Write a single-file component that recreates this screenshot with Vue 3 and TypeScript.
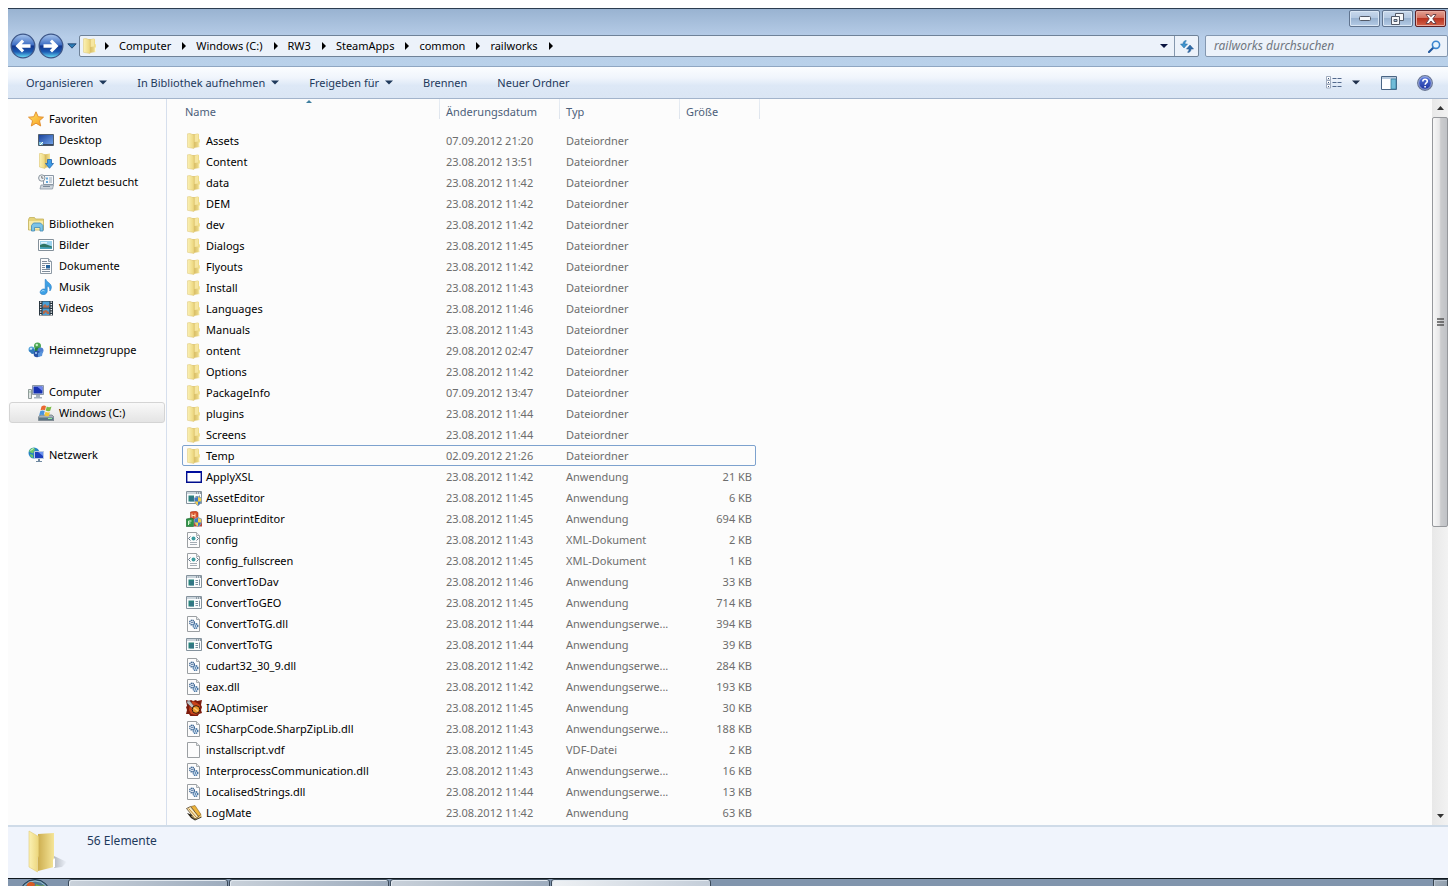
<script setup lang="ts">
interface NavEntry {
  label: string
  icon: string
  selected?: boolean
}
interface NavGroup extends NavEntry {
  children: NavEntry[]
}
interface FileRow {
  name: string
  icon: string
  date: string
  type: string
  size?: string
  focused?: boolean
}

const crumbs: string[] = ['Computer', 'Windows (C:)', 'RW3', 'SteamApps', 'common', 'railworks']

const commands: { label: string; menu: boolean }[] = [
  { label: 'Organisieren', menu: true },
  { label: 'In Bibliothek aufnehmen', menu: true },
  { label: 'Freigeben für', menu: true },
  { label: 'Brennen', menu: false },
  { label: 'Neuer Ordner', menu: false },
]

const navGroups: NavGroup[] = [
  {
    label: 'Favoriten',
    icon: 'star',
    children: [
      { label: 'Desktop', icon: 'desktop' },
      { label: 'Downloads', icon: 'downloads' },
      { label: 'Zuletzt besucht', icon: 'recent' },
    ],
  },
  {
    label: 'Bibliotheken',
    icon: 'library',
    children: [
      { label: 'Bilder', icon: 'picture' },
      { label: 'Dokumente', icon: 'document' },
      { label: 'Musik', icon: 'music' },
      { label: 'Videos', icon: 'video' },
    ],
  },
  { label: 'Heimnetzgruppe', icon: 'homegroup', children: [] },
  { label: 'Computer', icon: 'computer', children: [{ label: 'Windows (C:)', icon: 'drive', selected: true }] },
  { label: 'Netzwerk', icon: 'network', children: [] },
]

const folder = (name: string, date: string, focused = false): FileRow => ({
  name,
  icon: 'folder',
  date,
  type: 'Dateiordner',
  focused,
})
const file = (name: string, icon: string, time: string, type: string, size: string): FileRow => ({
  name,
  icon,
  date: `23.08.2012 ${time}`,
  type,
  size: `${size} KB`,
})

const EXT = 'Anwendungserwe...'
const rows: FileRow[] = [
  folder('Assets', '07.09.2012 21:20'),
  folder('Content', '23.08.2012 13:51'),
  folder('data', '23.08.2012 11:42'),
  folder('DEM', '23.08.2012 11:42'),
  folder('dev', '23.08.2012 11:42'),
  folder('Dialogs', '23.08.2012 11:45'),
  folder('Flyouts', '23.08.2012 11:42'),
  folder('Install', '23.08.2012 11:43'),
  folder('Languages', '23.08.2012 11:46'),
  folder('Manuals', '23.08.2012 11:43'),
  folder('ontent', '29.08.2012 02:47'),
  folder('Options', '23.08.2012 11:42'),
  folder('PackageInfo', '07.09.2012 13:47'),
  folder('plugins', '23.08.2012 11:44'),
  folder('Screens', '23.08.2012 11:44'),
  folder('Temp', '02.09.2012 21:26', true),
  file('ApplyXSL', 'window', '11:42', 'Anwendung', '21'),
  file('AssetEditor', 'appshield', '11:45', 'Anwendung', '6'),
  file('BlueprintEditor', 'blocks', '11:45', 'Anwendung', '694'),
  file('config', 'xml', '11:43', 'XML-Dokument', '2'),
  file('config_fullscreen', 'xml', '11:45', 'XML-Dokument', '1'),
  file('ConvertToDav', 'app', '11:46', 'Anwendung', '33'),
  file('ConvertToGEO', 'app', '11:45', 'Anwendung', '714'),
  file('ConvertToTG.dll', 'dll', '11:44', EXT, '394'),
  file('ConvertToTG', 'app', '11:44', 'Anwendung', '39'),
  file('cudart32_30_9.dll', 'dll', '11:42', EXT, '284'),
  file('eax.dll', 'dll', '11:42', EXT, '193'),
  file('IAOptimiser', 'optimiser', '11:45', 'Anwendung', '30'),
  file('ICSharpCode.SharpZipLib.dll', 'dll', '11:43', EXT, '188'),
  file('installscript.vdf', 'blank', '11:45', 'VDF-Datei', '2'),
  file('InterprocessCommunication.dll', 'dll', '11:43', EXT, '16'),
  file('LocalisedStrings.dll', 'dll', '11:44', EXT, '13'),
  file('LogMate', 'logmate', '11:42', 'Anwendung', '63'),
]
</script>

<template>
  <div class="screen">
    <svg class="sprites" aria-hidden="true">
      <defs>
        <linearGradient id="gFold" x1="0" x2="1"><stop offset="0" stop-color="#fbf1b4" /><stop offset="1" stop-color="#ecd67c" /></linearGradient>
        <linearGradient id="gBack" x1="0" x2="1"><stop offset="0" stop-color="#cdae50" /><stop offset="1" stop-color="#f5e598" /></linearGradient>
        <linearGradient id="gShade" x1="0" x2="1"><stop offset="0" stop-color="#8d939c" stop-opacity=".6" /><stop offset="1" stop-color="#8d939c" stop-opacity="0" /></linearGradient>
        <linearGradient id="gStar" x1="0" y1="0" x2="1" y2="1"><stop offset="0" stop-color="#ffe76a" /><stop offset="1" stop-color="#f79a1c" /></linearGradient>
        <linearGradient id="gScreen" x1="0" y1="0" x2="1" y2="1"><stop offset="0" stop-color="#173f98" /><stop offset="1" stop-color="#78aaf0" /></linearGradient>
        <linearGradient id="gOrb" x1="0" y1="0" x2="0" y2="1"><stop offset="0" stop-color="#a9c6ee" /><stop offset=".45" stop-color="#3f6fc4" /><stop offset=".5" stop-color="#12358c" /><stop offset=".75" stop-color="#1d5cb4" /><stop offset="1" stop-color="#6ee6fa" /></linearGradient>
        <linearGradient id="gHelp" x1="0" y1="0" x2="0" y2="1"><stop offset="0" stop-color="#5a7be0" /><stop offset="1" stop-color="#1a2f9a" /></linearGradient>
      </defs>
      <symbol id="i-folder" viewBox="0 0 16 16">
        <path d="M6 1.500l6-1 1 .7V6l1 .5v7.500L7 15z" fill="url(#gBack)" />
        <path d="M8.500 1.500l3.500-.5v7.500l-3.500.5z" fill="#f6e6a0" />
        <path d="M1.500.8L4 .5l4 1.500v13.500l-6.500-1.200z" fill="url(#gFold)" stroke="#dcc577" stroke-width=".5" />
        <path d="M12.800 9.500v4.500l1.200-.3v-4.200z" fill="#fdf8dc" />
      </symbol>
      <symbol id="i-star" viewBox="0 0 16 16"><path d="M8 .8l2.200 4.900 5.300.5-4 3.500 1.200 5.300L8 12.200 3.300 15l1.200-5.300-4-3.500 5.300-.5z" fill="url(#gStar)" stroke="#e08a2a" stroke-width=".9" /></symbol>
      <symbol id="i-desktop" viewBox="0 0 16 16"><path d="M.5 2.500h15v11H.5z" fill="url(#gScreen)" stroke="#52606e" /><path d="M1 12h14v1.500H1z" fill="#3a4a63" /><path d="M1 10h4v3H1z" fill="#7fc4dc" /><path d="M2 13l3-3" stroke="#fff" /></symbol>
      <symbol id="i-downloads" viewBox="0 0 16 16"><path d="M6 1.500L12 .500v13.500l-6 1z" fill="url(#gBack)" /><path d="M1.500.5L4 .5l3 1.500v13.500l-5.500-1.500z" fill="url(#gFold)" stroke="#d8bd5d" stroke-width=".5" /><path d="M9.500 6.500h4v4h2L11.500 15.300 7.500 10.500h2z" fill="#3d9be6" stroke="#2266ad" stroke-width=".8" /></symbol>
      <symbol id="i-recent" viewBox="0 0 16 16"><path d="M5.500 1.500h10v9h-10z" fill="#f5f8fb" stroke="#8c98a5" /><path d="M8 3.500h2v2H8zM8 7h2v2H8z" fill="#63a8dc" /><path d="M11 4h3M11 6h3M11 8h3" stroke="#9aa8b6" /><circle cx="3.800" cy="4" r="3.200" fill="#eef2f5" stroke="#8a949d" /><path d="M3.800 2v2.200h1.600" stroke="#555" fill="none" stroke-width=".8" /><path d="M3 11h12.500l-1 4H2z" fill="#cfd6dd" stroke="#8c98a5" stroke-width=".8" /><path d="M5 12.500h7" stroke="#7a8a9a" /></symbol>
      <symbol id="i-library" viewBox="0 0 16 16"><path d="M.5 3.500l1-2h5l1 1.500h8v11H.5z" fill="#e6d47a" stroke="#c3b05a" stroke-width=".8" /><path d="M1 5h14v8.500H1z" fill="#f6ebaa" /><path d="M3.500 15V9.500l2-2.500h7L15 9.500V15h-3v-3.500H6.500V15z" fill="#7cc4e8" stroke="#3f88b4" stroke-width=".8" /></symbol>
      <symbol id="i-picture" viewBox="0 0 16 16"><path d="M.5 2.500h15v11H.5z" fill="#fff" stroke="#84909a" /><path d="M2 4h12v8H2z" fill="#9cd2ee" /><path d="M2 8l4-1.500 8 3V12H2z" fill="#2f7565" /><path d="M2 10l12 .5V12H2z" fill="#48a2ba" /><path d="M3 5h6v1.500H3z" fill="#e5f5fc" /></symbol>
      <symbol id="i-document" viewBox="0 0 16 16"><path d="M2.500.5h8l3 3v12h-11z" fill="#fbfcfd" stroke="#8d99a4" /><path d="M10.500.5v3h3" fill="#dce4ea" stroke="#8d99a4" /><path d="M4 3.500h5M4 5.500h8M4 11.500h8M4 13.500h8M4 7.500h3M4 9.500h3" stroke="#7f8d9b" /><path d="M8 7h4v3.500H8z" fill="#24649e" /></symbol>
      <symbol id="i-music" viewBox="0 0 16 16"><path d="M8 .5c.4 3 6 3.500 5.300 8.500-.2 1.200-.8 2.200-1.500 3 .5-3-1-4.500-2.600-5v5.500c-.4 2.500-2.500 3.300-4.700 3S1.300 13 3 11.300s3.300-1.500 4.200-1V.5z" fill="#3da1e6" stroke="#2379c4" stroke-width=".6" /><path d="M3.500 12.500c1-1.300 2.500-1 3-.6" stroke="#b5e0fa" fill="none" /></symbol>
      <symbol id="i-video" viewBox="0 0 16 16"><path d="M1 1h14v14.500H1z" fill="#26333d" /><path d="M4.500 1.500h7v6h-7zM4.500 8.500h7v6.500h-7z" fill="#4b9fd5" /><path d="M5 6l2-2 2 2 2-1v2.500H5zM5 11l3-1 3 2v2H9l-1-2-2 2H5z" fill="#b66a4a" /><path d="M2.700 1.500v14M13.300 1.500v14" stroke="#f2f5f7" stroke-width="1.500" stroke-dasharray="1.300 1.200" /></symbol>
      <symbol id="i-homegroup" viewBox="0 0 16 16"><circle cx="9.500" cy="4" r="3.500" fill="#4ca653" /><path d="M6.500 7c1-2 5-2 6 0l.5 3H6z" fill="#27833c" /><circle cx="3.500" cy="7.500" r="3" fill="#5aa6dc" /><path d="M.8 8.500l5-2 2 5-4 .5z" fill="#3078bb" /><circle cx="12.500" cy="8.500" r="3" fill="#4d7fd0" /><circle cx="9" cy="12" r="3.300" fill="#2853a5" /><path d="M10 11l5-2-1 5-4 1z" fill="#5994dc" /><circle cx="8.800" cy="3" r="1.200" fill="#c7efc5" /><circle cx="3" cy="6.800" r="1" fill="#d7effc" /><circle cx="8" cy="11" r="1" fill="#b4d2fa" /></symbol>
      <symbol id="i-computer" viewBox="0 0 16 16"><path d="M.5 5.500h3v9h-3z" fill="#dfe4e4" stroke="#8f9b99" /><path d="M1.500 8h1" stroke="#4c9c62" /><path d="M4.500 1.500h11v9h-11z" fill="#d6dde6" stroke="#8d99a6" /><path d="M5.500 2.500h9v7h-9z" fill="#1731b2" /><path d="M9 2.500h5.500V7z" fill="#7087ee" /><path d="M8 11h4v2H8zM6 13h8v1.500H6z" fill="#a5b1bd" /></symbol>
      <symbol id="i-drive" viewBox="0 0 16 16"><path d="M2 10h12l2 2v3.500H.5V12z" fill="#a7b2ba" stroke="#66737d" stroke-width=".7" /><path d="M1 12.500h14.500V15H1z" fill="#5b7686" /><path d="M10 13h4v1h-4z" fill="#8cf0a0" /><path d="M3.500 1.500C5.500 0 7 .5 8 1.200L7 5.300c-1.500-.8-2.700-.8-4.500 0z" fill="#e9682f" /><path d="M8.800 1.500c1.500.9 3 .9 4.700 0l-1.300 4.300c-1.700.9-3 .6-4.500-.2z" fill="#7cbb43" /><path d="M2.200 6.200c2-.9 3-.7 4.500.1L5.700 10.300c-1.500-.7-2.700-.7-4.500 0z" fill="#4a95dc" /><path d="M7.500 6.700c1.500.9 3 .9 4.500.2l-1.200 4.100c-1.600.6-3 .4-4.400-.4z" fill="#f5c537" /></symbol>
      <symbol id="i-network" viewBox="0 0 16 16"><circle cx="6" cy="6" r="5.500" fill="#2684c4" /><path d="M2 2.500C5 0 7 1 7 2.500S5 4 5.500 5.500 2 6 1 4zM2 7l3 1v3L2.500 9.500z" fill="#6cc868" /><path d="M2.500 3.500l3-2" stroke="#ddf7e2" /><path d="M6.500 4.500h9v7h-9z" fill="#1c3fbc" stroke="#bccae0" /><path d="M10 5h5v4z" fill="#6b92ef" /><path d="M10 12h2v2h-2zM8 14h6v1H8z" fill="#7089a1" /></symbol>
      <symbol id="i-window" viewBox="0 0 16 16"><path d="M.7 2.700h14.600v10.600H.7z" fill="#fff" stroke="#000e8e" stroke-width="1.400" /><path d="M0 2h16v2H0z" fill="#000e9e" /></symbol>
      <symbol id="i-app" viewBox="0 0 16 16"><path d="M.5 1.500h15v12H.5z" fill="#fafcfd" stroke="#84929d" /><path d="M1 2h14v2H1z" fill="#cbd5dc" /><path d="M10 3h1M12 3h1M14 3h1" stroke="#53616d" /><path d="M2.500 5.500h5.500v6H2.500z" fill="#2a827c" /><path d="M4 7h4v4.500H4z" fill="#39698f" opacity=".5" /><path d="M9.500 6.500h2.500M9.500 8.500h2.500M9.500 10.500h2.500M13.500 5.500v6" stroke="#7d90a0" /></symbol>
      <symbol id="i-shield" viewBox="0 0 16 16"><path d="M8.300 8L12 6.500 15.700 8c0 4-1 6-3.700 7.700C9.300 14 8.300 12 8.300 8z" fill="#3d78c8" stroke="#92a4b5" stroke-width=".8" /><path d="M12 7l3.200 1.300V11.500H12zM8.900 11.500H12v3.700c-1.900-1-2.700-2.200-3.100-3.700z" fill="#f5d04b" /></symbol>
      <symbol id="i-appshield" viewBox="0 0 16 16"><use href="#i-app" /><use href="#i-shield" /></symbol>
      <symbol id="i-blocks" viewBox="0 0 16 16"><path d="M4.500 1l5-1 2.500 1.500V7L10.500 8h-6z" fill="#d8502c" stroke="#a33a20" stroke-width=".6" /><path d="M6 2.500v4M9 2.500v4M6 4.500h3" stroke="#ffe0b5" /><path d="M.3 8l5-1 2.200 1v7.500H.3z" fill="#2d9446" stroke="#176029" stroke-width=".6" /><path d="M2.500 14V10h3M2.500 12h2" stroke="#d9f8d5" fill="none" /><path d="M8 9l2-2h4l2 2v6.500H8z" fill="#b7453a" /><use href="#i-shield" /></symbol>
      <symbol id="i-blank" viewBox="0 0 16 16"><path d="M1.500.5h9l3 3v12h-12z" fill="#fcfcfc" stroke="#9b9fa2" /><path d="M10.500.5v3h3" fill="#e4e6e7" stroke="#a8adb0" /></symbol>
      <symbol id="i-xml" viewBox="0 0 16 16"><use href="#i-blank" /><circle cx="7.500" cy="6.500" r="2" fill="#3d9c9e" /><path d="M4.500 4.500l-2 2 2 2M10.500 4.500l2 2-2 2" fill="none" stroke="#52667a" stroke-width=".9" /><path d="M4 10.500h7M4 12.500h7" stroke="#a5adb5" /></symbol>
      <symbol id="i-dll" viewBox="0 0 16 16"><use href="#i-blank" /><circle cx="6" cy="6.500" r="2.300" fill="#f2f8ff" stroke="#38618f" stroke-width="1.400" stroke-dasharray="1.200 .5" /><circle cx="6" cy="6.500" r=".8" fill="#38618f" /><circle cx="9.500" cy="10" r="2.300" fill="#d5e7f7" stroke="#406f9f" stroke-width="1.400" stroke-dasharray="1.200 .5" /><circle cx="9.500" cy="10" r=".8" fill="#38618f" /></symbol>
      <symbol id="i-optimiser" viewBox="0 0 16 16"><path d="M0 0l3 1 2-1 2 1 3-1 1 1 5-1-1 5 1 2-1 3 1 3-3 1-2 3-3-1-3 1-2-3-3 0 1-4-1-3 1-1z" fill="#7c1b0d" /><path d="M4 4l3-3 4 2 3 2v7l-4 3-5-1-2-4z" fill="#c8431a" /><path d="M1 1l3 0 4 5-2 2-5-5z" fill="#bfc4c4" stroke="#434" stroke-width=".5" /><circle cx="10" cy="9.500" r="3.800" fill="#eb972f" stroke="#35180a" /><path d="M8 8l4 3" stroke="#f8d37c" stroke-width="1.400" /></symbol>
      <symbol id="i-logmate" viewBox="0 0 16 16"><path d="M1 8l4 5 4 2.500 6.500-3-1-3-6 1z" fill="#292418" /><path d="M5 11l9-3 2 3.500-7 3z" fill="#e4c177" /><path d="M5 1.500L9 .500l6 9-3 2z" fill="#edb43b" stroke="#6c4a15" stroke-width=".5" /><path d="M.5 3.500l4-2 8 10-3.500 2.500z" fill="#f9e9bb" stroke="#49351b" stroke-width=".7" /><path d="M2.500 3.500l8 9" stroke="#bd8630" /></symbol>
    </svg>

    <div class="window">
      <header class="frame">
        <div class="caption">
          <button class="cap" aria-label="Minimieren"><svg width="12" height="6" viewBox="0 0 12 6"><rect x=".5" y=".5" width="11" height="4" rx="1" fill="#f6f8fa" stroke="#535a68" /></svg></button>
          <button class="cap" aria-label="Verkleinern"><svg width="13" height="12" viewBox="0 0 13 12"><path d="M4.500.5h8v7h-8z" fill="#f6f8fa" stroke="#535a68" /><path d="M.5 3.500h8v8h-8z" fill="#f6f8fa" stroke="#535a68" /><path d="M3 6.500h3v2H3z" fill="#a9c1dd" stroke="#535a68" /></svg></button>
          <button class="cap close" aria-label="Schließen"><svg width="12" height="10" viewBox="0 0 12 10"><path d="M1 .5h3l2 2.200L8 .5h3L7.800 4.800 11 9.500H8L6 7 4 9.500H1l3.200-4.700z" fill="#fff" stroke="#5e3b43" stroke-width=".9" /></svg></button>
        </div>
        <div class="navbar">
          <div class="travel">
            <button class="orb" aria-label="Zurück"><svg width="26" height="26" viewBox="0 0 26 26"><circle cx="13" cy="13" r="11.800" fill="url(#gOrb)" stroke="#3d5688" stroke-width="1.300" /><path d="M5.500 13l6.500-6.500 2.200 2.200-2.500 2.600H20.500v3.400h-8.800l2.500 2.600L12 19.500z" fill="#fff" /></svg></button>
            <button class="orb" aria-label="Vorwärts"><svg width="26" height="26" viewBox="0 0 26 26"><circle cx="13" cy="13" r="11.800" fill="url(#gOrb)" stroke="#3d5688" stroke-width="1.300" /><path d="M20.500 13L14 6.500l-2.200 2.200 2.500 2.600H5.500v3.400h8.800l-2.500 2.600L14 19.500z" fill="#fff" /></svg></button>
            <button class="history" aria-label="Letzte Seiten"><svg width="10" height="6" viewBox="0 0 10 6"><path d="M.8.800h8.400L5 5.200z" fill="#2b7cb6" stroke="#1b3a66" stroke-width=".8" /></svg></button>
          </div>
          <nav class="address" aria-label="Adresse">
            <svg class="icon"><use href="#i-folder" /></svg>
            <template v-for="c in crumbs" :key="c">
              <svg class="chev" viewBox="0 0 4 8"><path d="M0 0l4 4-4 4z" /></svg>
              <button class="crumb">{{ c }}</button>
            </template>
            <svg class="chev" viewBox="0 0 4 8"><path d="M0 0l4 4-4 4z" /></svg>
            <button class="drop" aria-label="Vorherige Orte"><svg width="8" height="4" viewBox="0 0 8 4"><path d="M0 0h8L4 4z" /></svg></button>
            <button class="refresh" aria-label="Aktualisieren"><svg width="14" height="13" viewBox="0 0 14 13"><path d="M6 .5C4 .8 3 2 3 4H.500l3.500 4L7.500 4H5c0-1.500.3-2.500 1.500-3z" fill="#3f93cd" stroke="#226ba3" stroke-width=".5" /><path d="M8 12.500c2-.3 3-1.500 3-3.500h2.500L10 5 6.500 9H9c0 1.500-.3 2.500-1.500 3z" fill="#2f6da9" stroke="#22508b" stroke-width=".5" /></svg></button>
          </nav>
          <label class="search">
            <input type="text" placeholder="railworks durchsuchen" aria-label="railworks durchsuchen" />
            <svg width="13" height="13" viewBox="0 0 13 13"><path d="M5.500 7.500L1 12" stroke="#23589e" stroke-width="2.200" stroke-linecap="round" /><circle cx="8" cy="4.800" r="3.600" fill="#e9f5fe" stroke="#3c86cf" stroke-width="1.600" /></svg>
          </label>
        </div>
      </header>

      <div class="commands" role="toolbar" aria-label="Befehle">
        <button v-for="c in commands" :key="c.label" class="command">
          {{ c.label }}
          <svg v-if="c.menu" width="8" height="5" viewBox="0 0 8 5"><path d="M0 .500h8L4 4.500z" fill="#1e395b" /></svg>
        </button>
        <div class="tools">
          <button class="tool" aria-label="Ansicht ändern"><svg width="16" height="13" viewBox="0 0 16 13"><path d="M.5.5h4v3.500h-4zM.5 4.500h4V8h-4zM.5 8.500h4V12h-4z" fill="#fff" stroke="#8a98ad" stroke-width=".8" /><path d="M2 2h1v1H2zM2 6h1v1H2zM2 10h1v1H2z" fill="#35517c" /><path d="M6.500 2.500h4M11.500 2.500h4M6.500 6.500h4M11.500 6.500h4M6.500 10.500h4M11.500 10.500h4" stroke="#52698d" /></svg></button>
          <button class="tool more" aria-label="Weitere Optionen"><svg width="8" height="5" viewBox="0 0 8 5"><path d="M0 .500h8L4 4.500z" fill="#1e2f4b" /></svg></button>
          <button class="tool pane" aria-label="Vorschaufenster"><svg width="16" height="14" viewBox="0 0 16 14"><path d="M.5.5h15v13H.5z" fill="#fff" stroke="#4a6584" /><path d="M1 1h14v2H1z" fill="#b6c9dd" /><path d="M10 3h5v10h-5z" fill="#70bcd8" stroke="#3b7f9f" stroke-width=".8" /></svg></button>
          <button class="tool" aria-label="Hilfe"><svg width="16" height="16" viewBox="0 0 16 16"><circle cx="8" cy="8" r="7.300" fill="url(#gHelp)" stroke="#6b7894" stroke-width="1.300" /><circle cx="8" cy="8" r="6.300" fill="none" stroke="#c2cdec" stroke-width=".7" /><path d="M5.800 6.400c0-3 4.500-2.800 4.500-.2 0 1.700-2.100 1.700-2.100 3.500M8.100 11v1.500" fill="none" stroke="#fff" stroke-width="1.600" /></svg></button>
        </div>
      </div>

      <main class="body">
        <nav class="tree" aria-label="Navigationsbereich">
          <ul v-for="g in navGroups" :key="g.label">
            <li><a href="#"><svg class="icon"><use :href="'#i-' + g.icon" /></svg>{{ g.label }}</a></li>
            <li v-for="n in g.children" :key="n.label">
              <a href="#" class="child" :class="{ selected: n.selected }"><svg class="icon"><use :href="'#i-' + n.icon" /></svg>{{ n.label }}</a>
            </li>
          </ul>
        </nav>
        <section class="list">
          <table>
            <colgroup><col class="c-name" /><col class="c-mid" /><col class="c-mid" /><col class="c-size" /></colgroup>
            <thead>
              <tr>
                <th class="sorted" aria-sort="ascending">Name</th>
                <th>Änderungsdatum</th>
                <th>Typ</th>
                <th>Größe</th>
              </tr>
            </thead>
            <tbody>
              <tr v-for="r in rows" :key="r.name" :class="{ focused: r.focused }">
                <td><span class="name"><svg class="icon"><use :href="'#i-' + r.icon" /></svg>{{ r.name }}</span></td>
                <td>{{ r.date }}</td>
                <td>{{ r.type }}</td>
                <td class="size">{{ r.size }}</td>
              </tr>
            </tbody>
          </table>
        </section>
        <div class="scroll">
          <button class="arrow" aria-label="Nach oben"><svg width="7" height="4" viewBox="0 0 7 4"><path d="M0 4h7L3.500 0z" fill="#333" /></svg></button>
          <div class="track">
            <div class="thumb"><svg width="7" height="8" viewBox="0 0 7 8"><path d="M0 1h7M0 4h7M0 7h7" stroke="#555" stroke-width="1.500" /></svg></div>
          </div>
          <button class="arrow" aria-label="Nach unten"><svg width="7" height="4" viewBox="0 0 7 4"><path d="M0 0h7L3.500 4z" fill="#333" /></svg></button>
        </div>
      </main>

      <footer class="details">
        <svg width="40" height="44" viewBox="0 0 40 44">
          <path d="M26 38l8-1 5-5-13-6z" fill="url(#gShade)" />
          <path d="M10 4l16-1v34l-16 4z" fill="url(#gBack)" />
          <path d="M1 1l9.500 5.500V26l-1 2v14L1 37z" fill="url(#gFold)" stroke="#e2cb74" stroke-width=".6" />
          <path d="M26 28l1 1v8l-2 1v-8z" fill="#fff" />
        </svg>
        <span>56 Elemente</span>
      </footer>
    </div>

    <div class="taskbar">
      <button class="start" aria-label="Start"><svg width="32" height="32" viewBox="0 0 32 32"><circle cx="16" cy="16" r="15.500" fill="#4f7891" stroke="#253d52" /><circle cx="16" cy="16" r="14" fill="none" stroke="#9ec2d3" /><path d="M8 5c3-3 6-2 8 0l-2 8H7z" fill="#d85b25" /><path d="M17 5c3 2 6 2 8 1l-2 8h-8z" fill="#7fae3c" /></svg></button>
      <div class="tasks">
        <button class="task" aria-label="Programm 1"></button>
        <button class="task" aria-label="Programm 2"></button>
        <button class="task" aria-label="Programm 3"></button>
        <button class="task active" aria-label="railworks"></button>
      </div>
      <button class="peek" aria-label="Desktop anzeigen"></button>
    </div>
  </div>
</template>

<style>
body {
  margin: 0;
  background: #fff;
}
</style>

<style scoped>
.screen {
  box-sizing: border-box;
  height: 100vh;
  padding: 8px 8px 0;
  display: flex;
  flex-direction: column;
  overflow: hidden;
  background: #fff;
  color: #000;
  font: 11px/21px "Noto Sans", "Open Sans", sans-serif;
}
.sprites {
  position: absolute;
  width: 0;
  height: 0;
}
button {
  padding: 0;
  border: 0;
  background: none;
  color: inherit;
  font: inherit;
  display: flex;
  align-items: center;
  justify-content: center;
}
svg {
  display: block;
  flex: none;
}
.icon {
  width: 16px;
  height: 16px;
}
.window {
  flex: 1;
  min-height: 0;
  display: flex;
  flex-direction: column;
}

.frame {
  border-top: 1px solid #2c3c50;
  background: linear-gradient(#99b3d1, #b7cde8 50%, #b9d1ea);
  border-bottom: 1px solid #8fa6c2;
}
.caption {
  display: flex;
  justify-content: flex-end;
  gap: 2px;
  padding: 1px 2px 0 0;
}
.cap {
  box-sizing: border-box;
  width: 31px;
  height: 17px;
  border: 1px solid #60748f;
  border-radius: 2px;
  background: linear-gradient(#c9d9eb, #b4c9e2 45%, #98b2d0 50%, #b5cce6);
  box-shadow: inset 0 0 0 1px #d9e6f4;
}
.cap.close {
  border-color: #5c1f24;
  background: linear-gradient(#e3a193, #d37262 45%, #b93320 50%, #d3634a);
  box-shadow: inset 0 0 0 1px #e8aca0;
}
.navbar {
  display: flex;
  align-items: center;
  padding: 6px 0 7px 2px;
}
.travel {
  display: flex;
  align-items: center;
  gap: 2px;
  margin-right: 1px;
}
.history {
  width: 12px;
  height: 20px;
}
.address {
  flex: 1;
  box-sizing: border-box;
  height: 22px;
  display: flex;
  align-items: center;
  gap: 10px;
  padding-left: 2px;
  border: 1px solid #6f8298;
  border-radius: 2px;
  background: #ecf2fa;
}
.address .icon {
  margin-right: -3px;
}
.chev {
  width: 4px;
  height: 8px;
}
.crumb {
  padding-right: 1px;
  line-height: 20px;
  white-space: nowrap;
}
.drop {
  margin-left: auto;
  height: 20px;
}
.drop path {
  fill: #0b1540;
}
.refresh {
  width: 24px;
  height: 20px;
  margin-left: -4px;
  border-left: 1px solid #8598ae;
}
.search {
  box-sizing: border-box;
  width: 243px;
  height: 22px;
  margin-left: 6px;
  display: flex;
  align-items: center;
  padding: 0 6px 0 8px;
  border: 1px solid #8397b0;
  border-radius: 2px;
  background: #ecf2fa;
}
.search input {
  flex: 1;
  min-width: 0;
  height: 20px;
  padding: 0;
  border: 0;
  outline: 0;
  background: none;
  font: italic 12px/20px "Noto Sans", "Open Sans", sans-serif;
}
.search input::placeholder {
  color: #6f7680;
  opacity: 1;
}

.commands {
  height: 32px;
  flex: none;
  box-sizing: border-box;
  display: flex;
  align-items: center;
  padding: 0 15px 0 18px;
  gap: 30px;
  color: #1e395b;
  background: linear-gradient(#fbfdff, #f0f5fc 35%, #dde8f6 60%, #dbe6f4);
  border-bottom: 1px solid #a3b4cb;
}
.command {
  gap: 6px;
  white-space: nowrap;
}
.tools {
  margin-left: auto;
  display: flex;
  align-items: center;
}
.tool.more {
  margin: 0 21px 0 10px;
}
.tool.pane {
  margin-right: 20px;
}

.body {
  flex: 1;
  min-height: 0;
  display: flex;
  background: #fcfcfc;
}
.tree {
  box-sizing: border-box;
  width: 159px;
  flex: none;
  padding: 9px 1px 0;
  border-right: 1px solid #d6dfed;
}
.tree ul {
  list-style: none;
  margin: 0 0 21px;
  padding: 0;
}
.tree a {
  display: flex;
  align-items: center;
  gap: 5px;
  height: 21px;
  padding-left: 19px;
  color: #000;
  text-decoration: none;
  white-space: nowrap;
}
.tree a.child {
  padding-left: 29px;
}
.tree a.selected {
  box-sizing: border-box;
  padding-left: 28px;
  border: 1px solid #d4d4d4;
  border-radius: 3px;
  background: linear-gradient(#f9f9f9, #e4e4e4);
}
.list {
  flex: 1;
  min-width: 0;
  overflow: hidden;
  padding-left: 15px;
}
table {
  width: 574px;
  table-layout: fixed;
  border-collapse: separate;
  border-spacing: 0;
}
.c-name {
  width: 258px;
}
.c-mid {
  width: 120px;
}
.c-size {
  width: 76px;
}
th {
  position: relative;
  height: 25px;
  padding: 0 0 6px 6px;
  text-align: left;
  font-weight: 400;
  color: #4c607a;
}
th:first-child {
  padding-left: 3px;
}
th::after {
  content: "";
  position: absolute;
  top: 0;
  right: 0;
  width: 1px;
  height: 20px;
  background: linear-gradient(#e8edf4, #dde3ec);
}
th:last-child::after {
  right: -4px;
}
th.sorted::before {
  content: "";
  position: absolute;
  top: 1px;
  left: 124px;
  border: solid transparent;
  border-width: 0 3px 3px;
  border-bottom-color: #3f7f9f;
}
td {
  height: 21px;
  padding: 0 0 0 6px;
  color: #6d6d6d;
  white-space: nowrap;
}
td:first-child {
  padding-left: 4px;
  color: #000;
}
td.size {
  padding: 0 4px 0 0;
  text-align: right;
}
.name {
  display: flex;
  align-items: center;
  gap: 4px;
}
tr.focused {
  outline: 1px solid #7da2ce;
  outline-offset: -1px;
  border-radius: 2px;
}

.scroll {
  width: 16px;
  flex: none;
  display: flex;
  flex-direction: column;
  background: linear-gradient(90deg, #e8e8e8, #f2f2f2);
}
.arrow {
  height: 18px;
}
.track {
  flex: 1;
  display: flex;
  flex-direction: column;
}
.track::after {
  content: "";
  flex: 281;
}
.thumb {
  flex: 410;
  display: flex;
  align-items: center;
  justify-content: center;
  border: 1px solid #96989c;
  border-radius: 2px;
  background: linear-gradient(90deg, #f7f7f7, #e8e8e9 45%, #cbccce 55%, #c0c2c6);
}

.details {
  height: 53px;
  flex: none;
  box-sizing: border-box;
  display: flex;
  gap: 19px;
  padding: 3px 0 0 20px;
  border-top: 2px solid #cfdbe8;
  background: #f0f4fc;
  color: #1e395b;
  font-size: 12px;
}

.taskbar {
  height: 8px;
  flex: none;
  box-sizing: border-box;
  display: flex;
  overflow: hidden;
  border-top: 1px solid #10181f;
  background: #8195ad;
}
.start {
  align-items: flex-start;
  height: 32px;
  margin: 0 17px 0 11px;
}
.tasks {
  display: flex;
  gap: 1px;
}
.task {
  box-sizing: border-box;
  width: 160px;
  height: 40px;
  border: 1px solid #3c4b5b;
  border-radius: 3px;
  box-shadow: inset 1px 1px 0 #e2e9f0;
  background: linear-gradient(100deg, #c9d1da, #9cabbd);
}
.task.active {
  background: linear-gradient(100deg, #eef1f4, #c2ccd8);
}
.peek {
  box-sizing: border-box;
  width: 15px;
  height: 40px;
  margin-left: auto;
  border: 1px solid #38444f;
  box-shadow: inset 1px 1px 0 #b9c5d2;
  background: linear-gradient(135deg, #a5b1bd, #66778a);
}
</style>
